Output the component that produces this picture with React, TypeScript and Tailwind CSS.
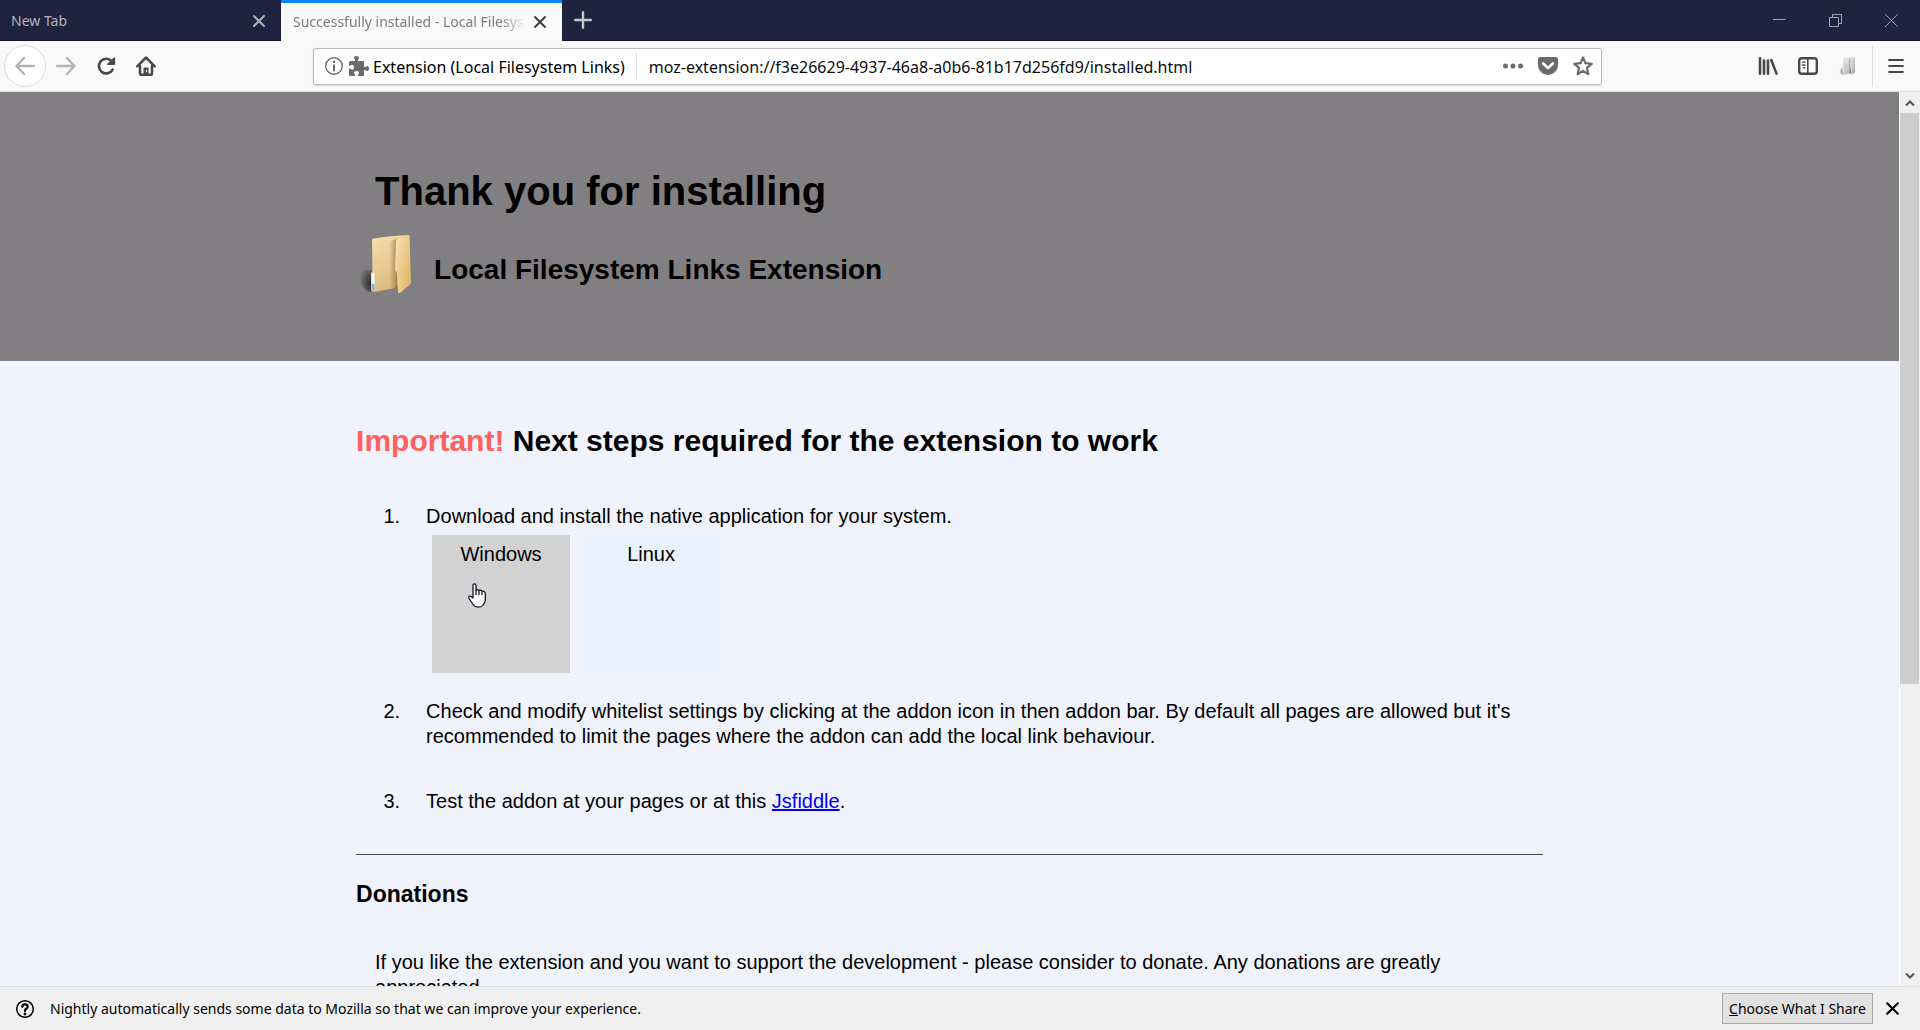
import React, { useId, type ReactNode } from "react";

type IconProps = { className?: string };

function CloseIcon({ className }: IconProps) {
  return (
    <svg viewBox="0 0 14 14" className={className} fill="none" stroke="currentColor" strokeWidth="2" strokeLinecap="round" aria-hidden="true">
      <path d="M2 2l10 10M12 2L2 12" />
    </svg>
  );
}

function PlusIcon() {
  return (
    <svg viewBox="0 0 18 18" className="size-[18px]" fill="none" stroke="currentColor" strokeWidth="2.400" strokeLinecap="round" aria-hidden="true">
      <path d="M9 1.200v15.600M1.200 9h15.600" />
    </svg>
  );
}

function ArrowIcon({ className }: IconProps) {
  return (
    <svg viewBox="0 0 20 20" className={className} fill="none" stroke="currentColor" strokeWidth="2.4" strokeLinecap="round" strokeLinejoin="round" aria-hidden="true">
      <path d="M19 10H2M9 2L1.500 10L9 18" />
    </svg>
  );
}

function ReloadIcon() {
  return (
    <svg viewBox="0 0 20 20" className="size-5" aria-hidden="true">
      <path d="M15.600 5.200A7.300 7.300 0 1 0 16.600 13.600" fill="none" stroke="currentColor" strokeWidth="2.600" strokeLinecap="round" />
      <path d="M18.200 1.500a1 1 0 0 1 1 1V8a1 1 0 0 1-1 1h-6.400a.7.7 0 0 1-.5-1.200l6.100-6a1 1 0 0 1 .8-.3z" fill="currentColor" />
    </svg>
  );
}

function HomeIcon() {
  return (
    <svg viewBox="0 0 20 20" className="size-5" fill="none" stroke="currentColor" strokeLinecap="round" strokeLinejoin="round" aria-hidden="true">
      <path d="M1.300 10.300L10 1.500l8.700 8.800" strokeWidth="2.500" />
      <path d="M4 10v7.500a1.300 1.300 0 0 0 1.300 1.300h9.400a1.300 1.300 0 0 0 1.300-1.300V10" strokeWidth="2.500" />
      <path d="M7.500 18.500v-7h5v7z" fill="currentColor" stroke="none" />
      <path d="M10.500 14.500v1.200" stroke="#f9f9fa" strokeWidth="1.200" />
    </svg>
  );
}

function InfoIcon() {
  return (
    <svg viewBox="0 0 20 20" className="size-5" aria-hidden="true">
      <circle cx="10" cy="10" r="8.300" fill="none" stroke="currentColor" strokeWidth="1.400" />
      <circle cx="10" cy="5.800" r="1.300" fill="currentColor" />
      <path d="M10 9.200v5.300" stroke="currentColor" strokeWidth="2" strokeLinecap="round" />
    </svg>
  );
}

function PuzzleIcon() {
  return (
    <svg viewBox="0 0 16 16" className="size-5" fill="currentColor" aria-hidden="true">
      <path d="M14.500 8c-.971 0-1 1-1.750 1a.765.765 0 0 1-.75-.75V5a1 1 0 0 0-1-1H7.750A.765.765 0 0 1 7 3.250c0-.75 1-.779 1-1.750C8 .635 7.100 0 6 0S4 .635 4 1.500c0 .971 1 1 1 1.750a.765.765 0 0 1-.75.750H1a1 1 0 0 0-1 1v2.250A.765.765 0 0 0 .75 8c.75 0 .779-1 1.750-1C3.365 7 4 7.900 4 9s-.635 2-1.500 2c-.971 0-1-1-1.750-1a.765.765 0 0 0-.750.750V15a1 1 0 0 0 1 1h3.250a.765.765 0 0 0 .750-.750c0-.750-1-.779-1-1.750 0-.865.900-1.500 2-1.500s2 .635 2 1.500c0 .971-1 1-1 1.750a.765.765 0 0 0 .750.750H11a1 1 0 0 0 1-1v-3.250a.765.765 0 0 1 .750-.750c.750 0 .779 1 1.750 1 .865 0 1.500-.900 1.500-2s-.635-2-1.500-2z" />
    </svg>
  );
}

function DotsIcon() {
  return (
    <svg viewBox="0 0 20 20" className="size-5" fill="currentColor" aria-hidden="true">
      <circle cx="2.500" cy="10" r="2.500" />
      <circle cx="10" cy="10" r="2.500" />
      <circle cx="17.500" cy="10" r="2.500" />
    </svg>
  );
}

function PocketIcon() {
  return (
    <svg viewBox="0 0 20 20" className="size-5" aria-hidden="true">
      <path d="M2 1h16a2 2 0 0 1 2 2v6a10 10 0 0 1-20 0V3a2 2 0 0 1 2-2z" fill="currentColor" />
      <path d="M5.200 7.500L10 12l4.800-4.500" fill="none" stroke="#fff" strokeWidth="2.600" strokeLinecap="round" strokeLinejoin="round" />
    </svg>
  );
}

function StarIcon() {
  return (
    <svg viewBox="0 0 20 20" className="size-5" fill="none" stroke="currentColor" strokeWidth="2.200" strokeLinejoin="round" aria-hidden="true">
      <path d="M10 1.500l2.500 5.700 6.200.6-4.700 4.100 1.400 6.300L10 14.900l-5.400 3.300L6 11.900 1.300 7.800l6.200-.6z" />
    </svg>
  );
}

function LibraryIcon() {
  return (
    <svg viewBox="0 0 20 20" className="size-5" fill="none" stroke="currentColor" strokeWidth="2.600" strokeLinecap="round" aria-hidden="true">
      <path d="M2 2.300v15.400M6 4.500V17.700M10 4.500V17.700M13.300 4L18.500 17.600" />
    </svg>
  );
}

function SidebarIcon() {
  return (
    <svg viewBox="0 0 20 20" className="size-5" fill="none" stroke="currentColor" strokeLinecap="round" aria-hidden="true">
      <rect x="1.200" y="2.200" width="17.600" height="15.600" rx="2.600" strokeWidth="2.400" />
      <path d="M9.800 2.500v15" strokeWidth="1.600" />
      <path d="M4.500 6.200h2.500M4.500 9h2.500M5 11.800h2" strokeWidth="1.300" />
    </svg>
  );
}

function MenuIcon() {
  return (
    <svg viewBox="0 0 16 16" className="size-4" fill="none" stroke="currentColor" strokeWidth="2.200" strokeLinecap="round" aria-hidden="true">
      <path d="M1.200 2h13.600M1.200 8h13.600M1.200 14h13.600" />
    </svg>
  );
}

function FolderIcon({ className, gray = false }: IconProps & { gray?: boolean }) {
  const id = useId();
  const back = gray ? ["#ececec", "#bcbcbc"] : ["#f6dfb0", "#dcba7e"];
  const front = gray ? ["#f4f4f4", "#a8a8a8"] : ["#fae4b4", "#e0b76c"];
  return (
    <svg viewBox="0 0 64 64" className={className} aria-hidden="true">
      <defs>
        <linearGradient id={id + "b"} x1="0" y1="0" x2="0.4" y2="1">
          <stop offset="0" stopColor={back[0]} />
          <stop offset="1" stopColor={back[1]} />
        </linearGradient>
        <linearGradient id={id + "f"} x1="0" y1="0" x2="1" y2="0.7">
          <stop offset="0" stopColor={front[0]} />
          <stop offset="1" stopColor={front[1]} />
        </linearGradient>
        <linearGradient id={id + "v"} x1="0" y1="0" x2="1" y2="0">
          <stop offset="0" stopColor={gray ? "#808080" : "#a88650"} stopOpacity="0" />
          <stop offset="1" stopColor={gray ? "#606060" : "#8c6c3c"} stopOpacity="0.85" />
        </linearGradient>
        <radialGradient id={id + "s"} cx="0.9" cy="0.6" r="0.9">
          <stop offset="0" stopColor="#222" stopOpacity={gray ? "0.5" : "0.9"} />
          <stop offset="1" stopColor="#222" stopOpacity="0" />
        </radialGradient>
      </defs>
      <path d="M3 42Q8 37 16 38V60Q10 60 7 55Q4 50 3 42z" fill={"url(#" + id + "s)"} />
      <path d="M16 8Q16 7 17 6.800Q34 3.500 53 3L54 45L39 56L18 60Q15 60 15 57V41L16.500 39z" fill={"url(#" + id + "b)"} />
      <path d="M33 11Q35 8 41 7V40L42 57L34 56z" fill={"url(#" + id + "v)"} />
      <path d="M40 9Q40 7.500 41.500 7L52 3.200Q53.500 3 53.500 4.500L55 50Q55 52 53.500 53L44 61Q42.500 62 42 60L41 41L39 38z" fill={"url(#" + id + "f)"} />
      <path d="M15.500 42Q17 39.500 18.500 42V57Q17 59.500 15.500 57z" fill="#f5f5f0" />
      <path d="M15.500 52h3v5q-1.500 2.500-3 0z" fill={gray ? "#bbb" : "#8fb2dc"} />
    </svg>
  );
}

function HandCursor({ className }: IconProps) {
  return (
    <svg viewBox="0 0 18 25" className={className} fill="#fff" stroke="#15152a" strokeWidth="1.300" strokeLinejoin="round" aria-hidden="true">
      <path d="M5 2.500Q5 .8 6.500.8T8 2.500V7.200Q9.300 6 11 7.400Q12.600 6.600 14 8.200Q17.300 7.800 17.300 11V17Q17.200 20 15 22Q13.500 24.200 10.500 24.200Q7 24.200 5.200 21.500L1 15.500Q.3 13.800 1.500 13.200Q3 12.700 5 15z" />
      <path d="M8 7v5M11 7.500V12M14 8.500V12" fill="none" />
    </svg>
  );
}

function HelpIcon() {
  return (
    <svg viewBox="0 0 20 20" className="size-5" fill="none" stroke="currentColor" aria-hidden="true">
      <circle cx="10" cy="10" r="8.300" strokeWidth="1.500" />
      <path d="M7.300 7.800Q7.300 5.300 10 5.300T12.700 7.600Q12.700 9 11.200 9.800Q10 10.500 10 12" strokeWidth="2.200" strokeLinecap="round" />
      <circle cx="10" cy="15" r="1.400" fill="currentColor" stroke="none" />
    </svg>
  );
}

function IconButton({ label, className = "", children }: { label: string; className?: string; children: ReactNode }) {
  return (
    <button type="button" aria-label={label} className={"flex shrink-0 items-center justify-center " + className}>
      {children}
    </button>
  );
}

function TabBar() {
  return (
    <header className="flex h-[41px] shrink-0 border-b border-[#15152f] bg-[#202340] text-sm">
      <div className="flex w-[281px] items-center justify-between pt-[2px] pr-[15px] pl-[11px] text-[#b1b2bb]">
        <button type="button">New Tab</button>
        <IconButton label="Close New Tab">
          <CloseIcon className="size-[14px]" />
        </IconButton>
      </div>
      <div className="-mb-px flex w-[281px] items-center justify-between gap-2 border-t-[3px] border-[#0a84ff] bg-[#f9f9fa] pr-[15px] pl-3 text-[#7c7c82]">
        <button type="button" className="min-w-0 flex-1 overflow-hidden text-left whitespace-nowrap [mask-image:linear-gradient(to_right,black_90%,transparent)]">
          Successfully installed - Local Filesystem Links
        </button>
        <IconButton label="Close Successfully installed" className="text-[#3f3f42]">
          <CloseIcon className="size-[14px]" />
        </IconButton>
      </div>
      <IconButton label="New tab" className="w-[42px] text-[#c5c6cd]">
        <PlusIcon />
      </IconButton>
      <div className="ml-auto flex pr-px text-[#a2a3ae]">
        <IconButton label="Minimize" className="w-14">
          <svg viewBox="0 0 13 13" className="size-[13px]" fill="none" stroke="currentColor" aria-hidden="true">
            <path d="M0 5.500h12.500" />
          </svg>
        </IconButton>
        <IconButton label="Restore" className="w-14">
          <svg viewBox="0 0 13 13" className="size-[13px]" fill="none" stroke="currentColor" aria-hidden="true">
            <path d="M.5 3.500h9v9h-9zM3.500 3.500v-3h9v9h-3" />
          </svg>
        </IconButton>
        <IconButton label="Close window" className="w-14">
          <svg viewBox="0 0 13 13" className="size-[13px]" fill="none" stroke="currentColor" aria-hidden="true">
            <path d="M0 0l13 13M13 0L0 13" />
          </svg>
        </IconButton>
      </div>
    </header>
  );
}

function Toolbar() {
  return (
    <nav className="flex h-[51px] shrink-0 items-center border-b border-[#dcdcde] bg-[#f9f9fa] text-base text-[#48484c]">
      <div className="flex w-[313px] shrink-0 items-center pl-1">
        <IconButton label="Back" className="size-[42px] rounded-full border border-[#dadadb] bg-white text-[#b4b4b5]">
          <ArrowIcon className="size-5" />
        </IconButton>
        <IconButton label="Forward" className="w-10 text-[#b4b4b5]">
          <ArrowIcon className="size-5 rotate-180" />
        </IconButton>
        <IconButton label="Reload" className="w-10">
          <ReloadIcon />
        </IconButton>
        <IconButton label="Home" className="w-10">
          <HomeIcon />
        </IconButton>
      </div>
      <div className="flex h-[37px] min-w-0 flex-1 items-center rounded-[3px] border border-[#bababc] bg-white pr-2 pl-[10px] text-[#6b6b6e] shadow-sm">
        <IconButton label="Site information" className="gap-[5px]">
          <InfoIcon />
          <PuzzleIcon />
        </IconButton>
        <span className="ml-1 shrink-0 pt-[2px] text-black">Extension (Local Filesystem Links)</span>
        <span className="ml-[11px] h-[26px] w-px shrink-0 bg-[#dedede]" />
        <input
          type="text"
          aria-label="Address"
          defaultValue="moz-extension://f3e26629-4937-46a8-a0b6-81b17d256fd9/installed.html"
          className="ml-3 min-w-0 flex-1 bg-transparent pt-[2px] text-[#0c0c0d] outline-none"
        />
        <div className="flex gap-[15px]">
          <IconButton label="Page actions">
            <DotsIcon />
          </IconButton>
          <IconButton label="Save to Pocket">
            <PocketIcon />
          </IconButton>
          <IconButton label="Bookmark this page">
            <StarIcon />
          </IconButton>
        </div>
      </div>
      <div className="flex w-[318px] shrink-0 items-center justify-end pr-4">
        <IconButton label="Library" className="w-10">
          <LibraryIcon />
        </IconButton>
        <IconButton label="Sidebars" className="w-10">
          <SidebarIcon />
        </IconButton>
        <IconButton label="Local Filesystem Links" className="w-10">
          <FolderIcon gray className="size-5" />
        </IconButton>
        <span className="mr-[15px] ml-[4px] h-[42px] w-px bg-[#dcdcde]" />
        <IconButton label="Menu">
          <MenuIcon />
        </IconButton>
      </div>
    </nav>
  );
}

function Step({ number, className = "", children }: { number: number; className?: string; children: ReactNode }) {
  return (
    <li className={"flex " + className}>
      <span className="w-11 shrink-0 text-right">{number}.</span>
      <div className="ml-[26px] min-w-0">{children}</div>
    </li>
  );
}

function InstalledPage() {
  return (
    <main className="min-w-0 flex-1 overflow-hidden bg-[#f0f3fc] font-['Liberation_Sans',Arial,sans-serif] text-xl leading-[25px] text-black">
      <section className="bg-[#827f82] pt-[76px] pb-[65px]">
        <div className="mx-auto w-5/8">
          <h1 className="pl-[19px] text-[40px] leading-[46px] font-bold">Thank you for installing</h1>
          <div className="mt-[18px] flex items-center gap-[14px]">
            <FolderIcon className="size-16 shrink-0" />
            <h2 className="pt-3 text-[28px] leading-8 font-bold">Local Filesystem Links Extension</h2>
          </div>
        </div>
      </section>
      <section className="mx-auto w-5/8 pt-[63px]">
        <h2 className="text-3xl leading-[34px] font-bold">
          <span className="text-[#ff6060]">Important!</span> Next steps required for the extension to work
        </h2>
        <ol className="mt-[46px]">
          <Step number={1}>
            <p>Download and install the native application for your system.</p>
            <div className="mt-[6px] ml-[6px] flex gap-3">
              <a href="#windows" className="relative size-[138px] bg-[#d2d2d2] pt-[7px] text-center">
                Windows
                <HandCursor className="absolute top-12 left-[36px] h-[25px] w-[18px]" />
              </a>
              <a href="#linux" className="size-[138px] bg-[#ebf2ff] pt-[7px] text-center">
                Linux
              </a>
            </div>
          </Step>
          <Step number={2} className="mt-[26px]">
            <p>
              Check and modify whitelist settings by clicking at the addon icon in then addon bar. By default all pages are
              allowed but it's recommended to limit the pages where the addon can add the local link behaviour.
            </p>
          </Step>
          <Step number={3} className="mt-10">
            <p>
              Test the addon at your pages or at this{" "}
              <a href="#jsfiddle" className="text-[#0000ee] underline">
                Jsfiddle
              </a>
              .
            </p>
          </Step>
        </ol>
        <hr className="mt-10 border-[#4a4848]" />
        <h3 className="mt-[25px] text-[23px] leading-7 font-bold">Donations</h3>
        <p className="mt-[42px] px-[19px]">
          If you like the extension and you want to support the development - please consider to donate. Any donations are
          greatly appreciated.
        </p>
      </section>
    </main>
  );
}

function Scrollbar() {
  return (
    <div className="flex w-[21px] shrink-0 flex-col border-l border-white bg-[#f0f0f0] text-[#505050]">
      <IconButton label="Scroll up" className="h-[21px]">
        <svg viewBox="0 0 10 6" className="h-[6px] w-[10px]" fill="none" stroke="currentColor" strokeWidth="2" aria-hidden="true">
          <path d="M1 5.500L5 1.500L9 5.500" />
        </svg>
      </IconButton>
      <div className="min-h-0 flex-1">
        <div className="mr-px h-[67%] bg-[#cdcdcd]" />
      </div>
      <IconButton label="Scroll down" className="h-[21px]">
        <svg viewBox="0 0 10 6" className="h-[6px] w-[10px]" fill="none" stroke="currentColor" strokeWidth="2" aria-hidden="true">
          <path d="M1 .5L5 4.500L9 .5" />
        </svg>
      </IconButton>
    </div>
  );
}

function NotificationBar() {
  return (
    <footer className="flex h-11 shrink-0 items-center border-t border-[#dfdfe0] bg-[#f0f0f0] pr-5 pl-[15px] text-sm text-black">
      <HelpIcon />
      <p className="ml-[15px]">Nightly automatically sends some data to Mozilla so that we can improve your experience.</p>
      <button type="button" className="ml-auto h-[31px] border border-[#a9a9a9] bg-[#e1e1e1] px-[6px]">
        <span className="underline">C</span>hoose What I Share
      </button>
      <IconButton label="Dismiss" className="ml-3">
        <CloseIcon className="size-[15px]" />
      </IconButton>
    </footer>
  );
}

export default function App() {
  return (
    <div className="flex h-screen flex-col overflow-hidden font-['Noto_Sans','Segoe_UI',sans-serif]">
      <TabBar />
      <Toolbar />
      <div className="flex min-h-0 flex-1">
        <InstalledPage />
        <Scrollbar />
      </div>
      <NotificationBar />
    </div>
  );
}
